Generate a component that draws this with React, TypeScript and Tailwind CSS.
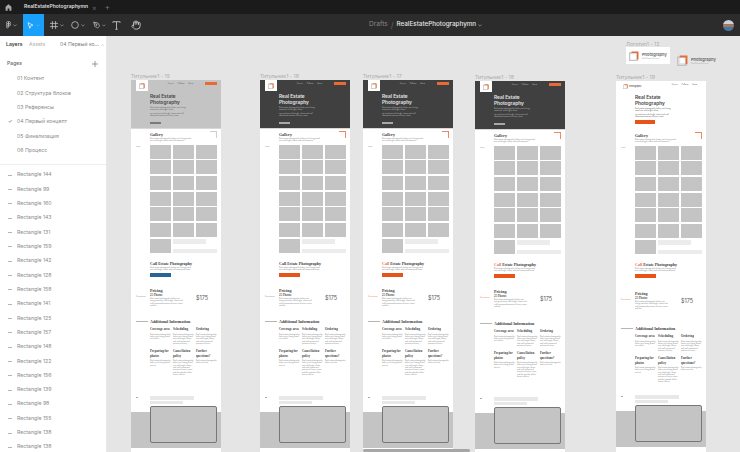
import React from "react";

const LOREM =
  "Real estate photography helps your listing stand out with bright, sharp and well composed pictures of every room and the outside of the house, delivered fast and ready for the market. Every order includes editing, color correction and online delivery so that your agents can publish the listing the next day.";

function Logo({ className }: { className: string }) {
  return (
    <svg viewBox="0 0 20 20" className={`shrink-0 ${className}`}>
      <rect x="1" y="4" width="15" height="15" fill="none" stroke="#c4c4c4" strokeWidth="3" />
      <rect x="6" y="5.5" width="8" height="9" fill="#fff" />
      <path d="M5 2.5 H17.5 V17" fill="none" stroke="#ea6a35" strokeWidth="3" />
    </svg>
  );
}

function Tiny({ className = "", chars = 120 }: { className?: string; chars?: number }) {
  return (
    <p className={`text-[1.8px] leading-[2.3px] text-[#8a8a8a] font-['Inter',sans-serif] ${className}`}>
      {LOREM.slice(0, chars)}
    </p>
  );
}

function Heading({ children, className = "" }: { children: React.ReactNode; className?: string }) {
  return (
    <h3 className={`font-['Liberation_Serif',serif] font-bold text-[4px] leading-[5px] text-[#3c3c3c] ${className}`}>
      {children}
    </h3>
  );
}

function Info({ title, chars }: { title: string; chars: number }) {
  return (
    <div className="w-[21px]">
      <h4 className="font-['Liberation_Serif',serif] font-bold text-[3.2px] leading-[4.4px] text-[#444]">{title}</h4>
      <Tiny className="mt-[1px]" chars={chars} />
    </div>
  );
}

type FrameProps = {
  name: string;
  pos: string;
  variant: "gray" | "dark" | "light";
  button: string;
  corner: string;
  pricingGap: string;
  infoGap: string;
  rows: string;
  accent?: boolean;
};

function Frame({ name, pos, variant, button, corner, pricingGap, infoGap, rows, accent }: FrameProps) {
  const heroBg = variant === "gray" ? "bg-[#c4c4c4]" : variant === "dark" ? "bg-[#404040]" : "bg-white";
  const heroText = variant === "dark" ? "text-[#e6e6e6]" : "text-[#444]";
  const smallText = variant === "dark" ? "text-[#b5b5b5]" : "text-[#666]";
  return (
    <div className={`absolute w-[90px] ${pos}`}>
      <div className="absolute -top-[7px] left-0 text-[5.2px] leading-[7px] text-[#ababab] whitespace-nowrap font-['Inter',sans-serif]">
        {name}
      </div>
      <div className="h-[400px] overflow-hidden bg-white flex flex-col">
        <div className={`relative h-[49px] shrink-0 ${heroBg} ${variant === "light" ? "" : "border-b border-[#d8d8d8]"}`}>
          {variant === "light" ? (
            <div className="absolute left-[7px] top-[3px] flex items-center gap-[1px]">
              <Logo className="w-[5px] h-[5px]" />
              <span className="font-['Inter',sans-serif] font-semibold text-[2px] leading-[2.4px] text-[#555]">Photography</span>
            </div>
          ) : (
            <div className="absolute left-[5px] top-0 w-[12px] h-[11px] bg-white flex items-center justify-center">
              <Logo className="w-[6px] h-[6px]" />
            </div>
          )}
          <div className={`flex items-center pt-[2px] pr-[4px] justify-end gap-[4px] text-[1.8px] leading-[3px] ${smallText} font-['Inter',sans-serif]`}>
            <span>Услуги</span>
            <span>Работы</span>
            <span>Цены</span>
            {variant !== "light" && <span className="ml-[8px] w-[12px] h-[2.5px] bg-[#ea6a35]" />}
            {variant === "light" && <span className="w-[1px]" />}
          </div>
          <div className={`ml-[19px] mt-[8px] font-['Inter',sans-serif] font-semibold text-[4.8px] leading-[6px] ${heroText}`}>
            Real Estate
            <br />
            Photography
          </div>
          <p className={`ml-[19px] mt-[1px] w-[40px] text-[1.8px] leading-[2.3px] font-['Inter',sans-serif] ${smallText}`}>
            {LOREM.slice(0, 72)}
          </p>
          <p className={`ml-[19px] mt-[1px] w-[40px] text-[1.8px] leading-[2.3px] font-['Inter',sans-serif] ${smallText}`}>
            {LOREM.slice(40, 112)}
          </p>
          {variant === "light" ? (
            <div className="ml-[19px] mt-[3px] w-[20px] h-[4px] bg-[#e8531a]" />
          ) : (
            <div className={`ml-[19px] mt-[6px] w-[11px] h-[1.5px] ${variant === "dark" ? "bg-[#a8a8a8]" : "bg-[#7a7a7a]"}`} />
          )}
        </div>

        <div className="relative pl-[19px] pt-[3px]">
          <div className={`absolute right-[4px] top-[2px] w-[7px] h-[7px] border-t border-r ${corner}`} />
          <div className="absolute left-[5px] top-[16px] text-[1.8px] leading-[2px] text-[#999]">Фото</div>
          <Heading>Gallery</Heading>
          <Tiny className="w-[42px]" chars={88} />
          <div className="mt-[3px] w-[67px] grid grid-cols-3 gap-x-[2px] gap-y-[1.67px]">
            {Array.from({ length: 18 }).map((_, i) => (
              <div key={i} className="h-[14px] bg-[#c4c4c4]" />
            ))}
            <div className="h-[14px] bg-[#c4c4c4]" />
            <div className="col-span-2 h-[14px] flex flex-col justify-between">
              <div className="h-[5px] w-[33px] bg-[#ececec]" />
              <div className="h-[4px] w-[44px] bg-[#ececec]" />
            </div>
          </div>
          <Heading className="mt-[8px]">
            {accent ? <span className="text-[#ea6a35]">Call</span> : "Call"} Estate Photography
          </Heading>
          <Tiny className="w-[42px]" chars={96} />
          <div className={`mt-[3px] w-[21px] h-[4px] ${button}`} />
        </div>

        <div className={`flex ${pricingGap}`}>
          <div className={`w-[19px] shrink-0 pl-[5px] pt-[7px] text-[1.8px] leading-[2px] ${accent ? "text-[#ea8a5e]" : "text-[#999]"}`}>Стоимость</div>
          <div className="flex-1">
            <Heading>Pricing</Heading>
            <div className="flex mt-[1px]">
              <div className="w-[46px]">
                <div className="font-['Liberation_Serif',serif] font-bold text-[3px] leading-[3px] text-[#555]">25 Photos</div>
                <Tiny chars={120} className="w-[34px]" />
              </div>
              <div className="font-['Inter',sans-serif] text-[5.5px] leading-[7px] text-[#555] pt-[1px]">$175</div>
            </div>
          </div>
        </div>

        <div className={`flex items-center ${infoGap}`}>
          <div className="w-[19px] shrink-0 pl-[5px]">
            <div className="w-[12px] h-[1px] bg-[#b5b5b5]" />
          </div>
          <Heading>Additional Information</Heading>
        </div>

        <div className={`ml-[19px] mt-[3px] w-[67px] grid grid-cols-3 gap-x-[2px] ${rows}`}>
          <Info title="Coverage area" chars={60} />
          <Info title="Scheduling" chars={108} />
          <Info title="Ordering" chars={108} />
          <Info title="Preparing for photos" chars={56} />
          <Info title="Cancellation policy" chars={150} />
          <Info title="Further questions?" chars={40} />
        </div>

        <div className="flex">
          <div className="w-[19px] shrink-0 pl-[5px] pt-[1px]">
            <div className="w-[2px] h-[1px] bg-[#aaa]" />
          </div>
          <div>
            <div className="w-[44px] h-[4px] bg-[#e8e8e8]" />
            <div className="mt-[1px] w-[33px] h-[3px] bg-[#e8e8e8]" />
          </div>
        </div>

        <div className="mt-[8px] h-[36px] shrink-0 bg-[#c4c4c4] pl-[19px]">
          <div className="relative -top-[6px] w-[67px] h-[37px] rounded-[2px] border border-[#777] bg-[#c4c4c4]" />
        </div>
      </div>
    </div>
  );
}

const Chevron = () => (
  <svg viewBox="0 0 6 4" className="w-[4px] h-[3px] ml-[2px]" fill="none" stroke="#a8a8a8" strokeWidth="1">
    <path d="M0.5 0.5 L3 3 L5.5 0.5" />
  </svg>
);

const PAGES = ["01 Контент", "02 Структура блоков", "03 Референсы", "04 Первый концепт", "05 Финализация", "06 Процесс"];
const RECTS = [144, 99, 160, 143, 131, 159, 142, 128, 158, 141, 125, 157, 148, 122, 156, 139, 98, 155, 138, 138];

export default function App() {
  return (
    <div className="w-[740px] h-[452px] overflow-hidden flex flex-col font-['Inter',sans-serif] bg-[#e5e5e5]">
      <div className="h-[14px] shrink-0 bg-[#1b1b1b] flex items-center">
        <div className="w-[17px] flex justify-center">
          <svg viewBox="0 0 12 12" className="w-[7px] h-[7px]" fill="#a8a8a8">
            <path d="M6 0.5 L11 4.5 V11.5 H7.5 V7.5 H4.5 V11.5 H1 V4.5 Z" />
          </svg>
        </div>
        <span className="ml-[7px] text-[5px] font-semibold text-[#dedede] w-[66px] whitespace-nowrap">RealEstatePhotographymn</span>
        <span className="text-[7px] leading-[7px] text-[#666] ml-[2px]">×</span>
        <span className="text-[8px] leading-[8px] text-[#777] ml-[8px]">+</span>
      </div>

      <div className="relative h-[22px] shrink-0 bg-[#2c2c2c] flex items-center">
        <div className="w-[23px] flex items-center justify-center">
          <svg viewBox="0 0 12 18" className="w-[5px] h-[8px]" fill="none" stroke="#c8c8c8" strokeWidth="1.6">
            <path d="M6 1 H3.5 a2.5 2.5 0 0 0 0 5 H6 Z M6 1 H8.5 a2.5 2.5 0 0 1 0 5 H6 Z M6 6 H3.5 a2.5 2.5 0 0 0 0 5 H6 Z M6 11 H3.5 a2.5 2.5 0 1 0 2.5 2.5 Z" />
            <circle cx="8.5" cy="8.5" r="2.5" />
          </svg>
          <Chevron />
        </div>
        <div className="w-[21px] h-[22px] bg-[#18a0fb] flex items-center justify-center">
          <svg viewBox="0 0 10 10" className="w-[7px] h-[7px]" fill="none" stroke="#fff" strokeWidth="1">
            <path d="M1.5 1 L8.5 4.5 L5.3 5.6 L4 9 Z" />
          </svg>
          <Chevron />
        </div>
        <div className="w-[21px] pl-[6px] flex items-center">
          <svg viewBox="0 0 10 10" className="w-[8px] h-[8px]" fill="none" stroke="#d0d0d0" strokeWidth="0.9">
            <path d="M3 0 V10 M7 0 V10 M0 3 H10 M0 7 H10" />
          </svg>
          <Chevron />
        </div>
        <div className="w-[22px] pl-[6px] flex items-center">
          <svg viewBox="0 0 10 10" className="w-[8px] h-[8px]" fill="none" stroke="#d0d0d0" strokeWidth="0.9">
            <circle cx="5" cy="5" r="4.2" />
          </svg>
          <Chevron />
        </div>
        <div className="w-[19px] pl-[6px] flex items-center">
          <svg viewBox="0 0 10 10" className="w-[8px] h-[8px]" fill="none" stroke="#d0d0d0" strokeWidth="0.9">
            <path d="M1 1 L7 2.5 L9 6.5 L6.5 9 L2.5 7 Z M1 1 L4.2 4.2" />
            <circle cx="4.8" cy="4.8" r="0.8" />
          </svg>
          <Chevron />
        </div>
        <svg viewBox="0 0 10 10" className="ml-[6px] w-[9px] h-[9px]" fill="none" stroke="#d0d0d0" strokeWidth="0.9">
          <path d="M1 2 V0.8 H9 V2 M5 0.8 V9.2 M3.7 9.2 H6.3" />
        </svg>
        <svg viewBox="0 0 24 24" className="ml-[10px] w-[10px] h-[10px]" fill="none" stroke="#d0d0d0" strokeWidth="2" strokeLinecap="round" strokeLinejoin="round">
          <path d="M18 11V6a2 2 0 0 0-4 0M14 10V4a2 2 0 0 0-4 0v2M10 10.5V6a2 2 0 0 0-4 0v8" />
          <path d="M18 8a2 2 0 1 1 4 0v6a8 8 0 0 1-8 8h-2c-2.8 0-4.5-.9-6-2.4L2.4 16a2 2 0 0 1 2.8-2.8L7 15" />
        </svg>
        <div className="absolute left-[369px] top-0 h-full flex items-center whitespace-nowrap">
          <span className="text-[6.6px] text-[#868686]">Drafts</span>
          <span className="text-[#777] mx-[3px] text-[8px] font-light">/</span>
          <span className="text-[6.3px] text-[#e4e4e4] font-medium">RealEstatePhotographymn</span>
          <Chevron />
        </div>
        <div className="ml-auto mr-[6px] w-[11px] h-[11px] rounded-full overflow-hidden flex flex-col">
          <div className="h-[4px] bg-[#c9d2d8]" />
          <div className="h-[3px] bg-[#a8745c]" />
          <div className="h-[4px] bg-[#3f77a8]" />
        </div>
      </div>

      <div className="flex-1 flex min-h-0">
        <aside className="w-[107px] shrink-0 bg-white border-r border-[#e8e8e8] overflow-hidden">
          <div className="h-[17px] flex items-center pl-[6px] text-[5.1px] whitespace-nowrap">
            <span className="font-semibold text-[#444] pt-[1px] w-[23px]">Layers</span>
            <span className="text-[#b0b0b0] pt-[1px] w-[31px]">Assets</span>
            <span className="text-[#808080] pt-[1px]">04 Первый ко...</span>
            <svg viewBox="0 0 6 4" className="w-[3px] h-[2px] ml-[2px]" fill="none" stroke="#aaa" strokeWidth="1">
              <path d="M0.5 3.5 L3 1 L5.5 3.5" />
            </svg>
          </div>
          <div className="h-[19px] flex items-center justify-between px-[7px] pt-[2px] text-[5.1px] text-[#666] font-medium">
            <span>Pages</span>
            <svg viewBox="0 0 7 7" className="w-[6px] h-[6px] mr-[1px]" stroke="#888" strokeWidth="1">
              <path d="M3.5 0 V7 M0 3.5 H7" />
            </svg>
          </div>
          <ul className="border-b border-[#efefef] pb-[6px]">
            {PAGES.map((p, i) => (
              <li key={p} className="h-[14.33px] flex items-center text-[5.2px] text-[#8a8a8a] whitespace-nowrap">
                <span className="w-[17px] pl-[8px] text-[5px] text-[#444]">{i === 3 ? "✓" : ""}</span>
                {p}
              </li>
            ))}
          </ul>
          <ul className="mt-[3px]">
            {RECTS.map((r, i) => (
              <li key={i} className="h-[14.33px] flex items-center text-[5.2px] text-[#8a8a8a] whitespace-nowrap">
                <span className="ml-[8px] mr-[5px] w-[4px] h-[1px] bg-[#b5b5b5]" />
                Rectangle {r}
              </li>
            ))}
          </ul>
        </aside>

        <main className="relative flex-1 overflow-hidden bg-[#e5e5e5]">
          <Frame name="Титульник1 - 15" pos="left-[24px] top-[44px]" variant="gray" button="bg-[#2a6496]" corner="border-[#cfcfcf]" pricingGap="mt-[11px]" infoGap="mt-[13px]" rows="grid-rows-[22px_47px]" />
          <Frame name="Титульник1 - 16" pos="left-[153px] top-[44px]" variant="dark" button="bg-[#e8531a]" corner="border-[#ef8a5e]" pricingGap="mt-[11px]" infoGap="mt-[13px]" rows="grid-rows-[22px_47px]" />
          <Frame name="Титульник1 - 17" pos="left-[256px] top-[44px]" variant="dark" button="bg-[#e8531a]" corner="border-[#ef8a5e]" pricingGap="mt-[11px]" infoGap="mt-[13px]" rows="grid-rows-[22px_47px]" accent />
          <Frame name="Титульник1 - 18" pos="left-[368px] top-[45px]" variant="dark" button="bg-[#e8531a]" corner="border-[#ef8a5e]" pricingGap="mt-[11px]" infoGap="mt-[14px]" rows="grid-rows-[22px_46px]" accent />
          <Frame name="Титульник1 - 19" pos="left-[509px] top-[45px]" variant="light" button="bg-[#e8531a]" corner="border-[#ef8a5e]" pricingGap="mt-[13px]" infoGap="mt-[17px]" rows="grid-rows-[22px_39px]" accent />

          <div className="absolute left-[519px] top-[5px] text-[5.2px] leading-[7px] text-[#ababab] whitespace-nowrap">Логотип1 - 12</div>
          <div className="absolute left-[519px] top-[11px] w-[44px] h-[17px] bg-white flex items-center pl-[3px] gap-[3px]">
            <Logo className="w-[10px] h-[10px]" />
            <div>
              <div className="text-[4px] leading-[5px] font-semibold text-[#666]">Photography</div>
              <div className="text-[1.8px] leading-[3px] text-[#aaa]">Real Estate Services</div>
            </div>
          </div>
          <div className="absolute left-[570px] top-[19px] flex items-center gap-[3px]">
            <Logo className="w-[11px] h-[11px]" />
            <div>
              <div className="text-[4px] leading-[5px] font-semibold text-[#666]">Photography</div>
              <div className="text-[1.8px] leading-[3px] text-[#aaa]">Real Estate Services</div>
            </div>
          </div>
          <div className="absolute left-[256px] bottom-0 w-[107px] h-[3px] rounded-full bg-[#a6a6a6]" />
        </main>
      </div>
    </div>
  );
}
